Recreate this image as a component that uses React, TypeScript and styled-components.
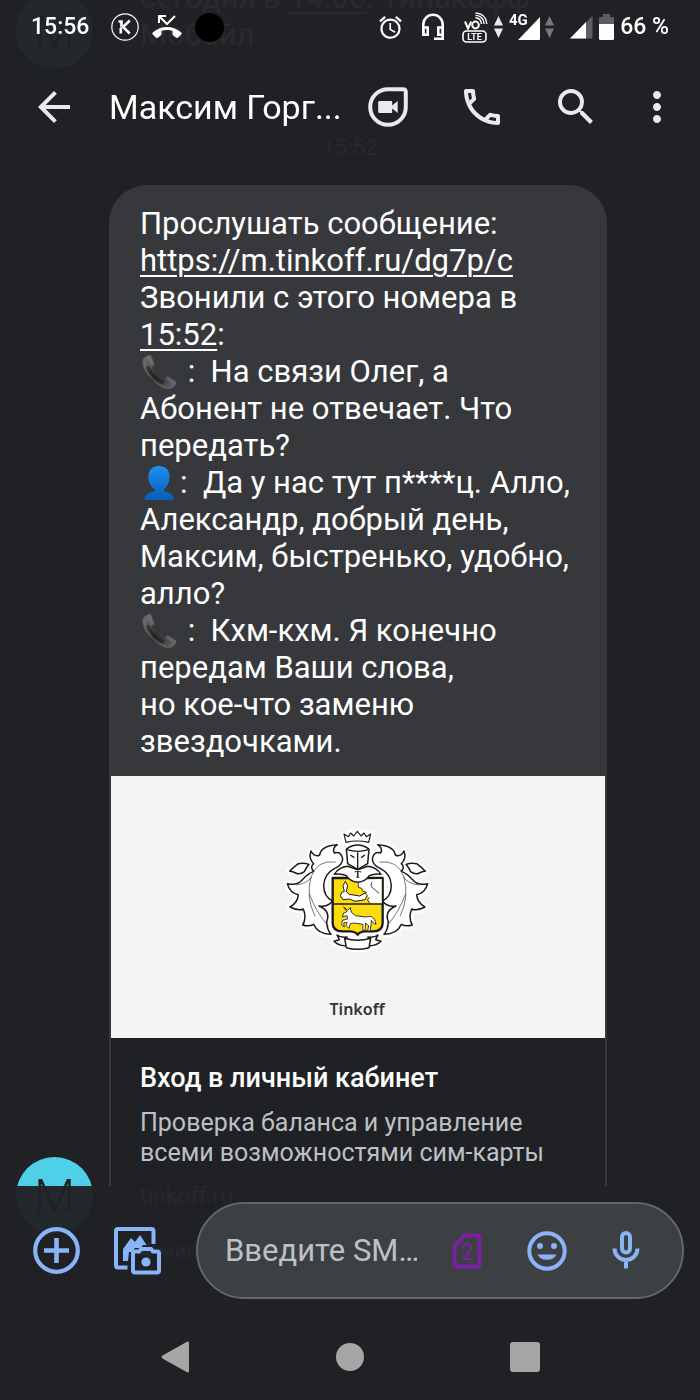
import React from "react";
import styled, { createGlobalStyle } from "styled-components";
import {
  MdArrowBack,
  MdOutlineCall,
  MdSearch,
  MdMoreVert,
  MdAlarm,
} from "react-icons/md";

const color = {
  page: "#202124",
  bubble: "#37383c",
  veil: "rgba(32, 33, 36, 0.96)",
  text: "#ffffff",
  icon: "#e8eaed",
  muted: "#bdc1c6",
  accent: "#8ab4f8",
  avatar: "#4dd0e8",
  field: "#3c4043",
  fieldLine: "#63666a",
  sim: "#7b1fa2",
  nav: "#a6a6a6",
};

const GlobalStyle = createGlobalStyle`
  * { box-sizing: border-box; }
  body {
    margin: 0;
    background: ${color.page};
    color: ${color.text};
    font-family: Roboto, "Liberation Sans", sans-serif;
  }
  button {
    padding: 0;
    border: 0;
    background: none;
    color: inherit;
    font: inherit;
    cursor: pointer;
  }
  svg { display: block; flex: none; }
`;

const Screen = styled.div`
  display: flex;
  flex-direction: column;
  justify-content: flex-end;
  height: 100vh;
  overflow: hidden;
`;

const TopBars = styled.header`
  position: fixed;
  inset: 0 0 auto;
  z-index: 1;
  background: ${color.veil};
`;

const StatusBar = styled.div`
  display: flex;
  align-items: center;
  justify-content: space-between;
  height: 54px;
  padding: 0 31px;
`;

const StatusGroup = styled.div<{ $gap: number }>`
  display: flex;
  align-items: center;
  gap: ${(p) => p.$gap}px;
`;

const StatusText = styled.span`
  font-size: 23px;
  line-height: 28px;
  font-weight: 500;
  white-space: nowrap;
`;

const CameraDot = styled.span`
  width: 29px;
  height: 29px;
  border-radius: 50%;
  background: #000;
`;

const AppBar = styled.div`
  display: flex;
  align-items: center;
  height: 106px;
  padding: 0 19px 0 30px;
  color: ${color.icon};
`;

const Title = styled.h1`
  flex: 1;
  min-width: 0;
  margin: 0 0 0 31px;
  color: ${color.text};
  font-size: 34px;
  line-height: 44px;
  font-weight: 400;
  white-space: nowrap;
`;

const Actions = styled.div`
  display: flex;
  align-items: center;
  gap: 46px;

  & > :last-child { margin-left: -13px; }
`;

const Thread = styled.main`
  display: flex;
  flex-direction: column;
`;

const MessageRow = styled.article`
  display: flex;
  align-items: flex-end;
  gap: 16px;
  padding: 0 93px 0 16px;
`;

const Avatar = styled.span`
  flex: none;
  width: 77px;
  height: 77px;
  border-radius: 50%;
  background: ${color.avatar};
  color: ${color.page};
  font-size: 47px;
  line-height: 77px;
  font-weight: 300;
  text-align: center;
`;

const Bubble = styled.div`
  flex: 1;
  min-width: 0;
  border-radius: 38px 38px 38px 8px;
  overflow: hidden;
  background: ${color.bubble};
`;

const BubbleText = styled.p`
  margin: 0;
  padding: 20px 31px 16px;
  font-size: 31px;
  line-height: 37px;

  a { color: inherit; text-underline-offset: 4px; text-decoration-thickness: 2px; }
  svg { display: inline-block; margin-right: 2px; vertical-align: -8px; }
`;

const Stamp = styled.time`
  display: block;
  margin: 66px 0 24px;
  color: ${color.muted};
  font-size: 22px;
  line-height: 26px;
  text-align: center;
`;

const Preview = styled.a`
  display: block;
  margin: 0 2px 2px;
  border-radius: 0 0 36px 36px;
  background: ${color.page};
  color: inherit;
  text-decoration: none;
`;

const PreviewImage = styled.figure`
  display: flex;
  flex-direction: column;
  align-items: center;
  justify-content: space-between;
  height: 262px;
  margin: 0;
  padding: 51px 2px 17px 0;
  background: #f4f4f4;

  figcaption {
    color: #333;
    font: 600 16px/24px "Noto Sans", "Open Sans", sans-serif;
  }
`;

const PreviewBody = styled.div`
  padding: 24px 24px 20px 29px;
  color: ${color.muted};
  font-size: 25px;
  line-height: 30px;

  h2 {
    margin: 0 0 14px;
    color: ${color.text};
    font-size: 27px;
    line-height: 32px;
    font-weight: 500;
  }
  p { margin: 0; }
  p + p { margin-top: 14px; font-size: 23px; }
`;

const SentAgo = styled.p`
  margin: 0;
  padding: 4px 0 136px 140px;
  color: ${color.muted};
  font-size: 22px;
  line-height: 26px;
`;

const BottomBars = styled.footer`
  position: fixed;
  inset: auto 0 0;
  z-index: 1;
  background: ${color.veil};
`;

const Composer = styled.form`
  display: flex;
  align-items: center;
  gap: 34px;
  padding: 16px 16px 15px 33px;
  color: ${color.accent};
`;

const Field = styled.div`
  display: flex;
  flex: 1;
  align-items: center;
  gap: 35px;
  min-width: 0;
  height: 97px;
  padding: 0 32px 0 27px;
  border: 2px solid ${color.fieldLine};
  border-radius: 49px;
  background: ${color.field};
`;

const MessageInput = styled.input`
  flex: 1;
  min-width: 0;
  padding: 0;
  border: 0;
  outline: 0;
  background: none;
  color: ${color.text};
  font: 400 31px/40px Roboto, sans-serif;

  &::placeholder { color: ${color.muted}; opacity: 1; }
`;

const NavBar = styled.nav`
  display: flex;
  align-items: center;
  justify-content: center;
  gap: 146px;
  height: 86px;
  color: ${color.nav};
`;

const KIcon = () => (
  <svg width="28" height="28" viewBox="0 0 28 28" fill="none" stroke="#fff">
    <circle cx="14" cy="14" r="13.200" strokeWidth="1.200" />
    <path d="M7.500 8.500h3v4.500M9.800 15v5.500M18.800 7.500 12 14l6.800 6.500" strokeWidth="2.600" />
    <path d="M9.800 12.500V15" strokeWidth="1.200" />
  </svg>
);

const MissedCallIcon = () => (
  <svg width="30" height="24" viewBox="0 0 30 24" fill="#fff">
    <path d="M7 8V1h7M7.500 1.500 15 9l8-8" fill="none" stroke="#fff" strokeWidth="2" />
    <path d="M15 12C9.500 12 4.500 14 .8 17.600q-1 1 0 2l3 3q.9.900 2 .1l3-2.300q.7-.6.7-1.500v-3.200q5.500-1.500 11 0v3.200q0 .9.700 1.500l3 2.300q1.100.8 2-.1l3-3q1-1 0-2C25.500 14 20.500 12 15 12z" />
  </svg>
);

const HeadsetIcon = () => (
  <svg width="24" height="28" viewBox="0 0 24 28" fill="none" stroke="#fff" strokeWidth="2.600">
    <path d="M2.300 21V11.500a9.700 9.700 0 0 1 19.400 0v14.200H13" />
    <path d="M2.300 14.500h4.400v7.200H2.300zM17.300 14.500h4.400v7.200h-4.400z" />
  </svg>
);

const VolteIcon = () => (
  <svg width="26" height="31" viewBox="0 0 26 31" fill="none" stroke="#fff">
    <path d="m3 9.500 3 7 3.200-7" strokeWidth="2" />
    <ellipse cx="13.500" cy="13" rx="3.300" ry="3.400" strokeWidth="2" />
    <path d="M13.500 5.800q5.300.2 6 6.200M13.500 1q10.500.500 11.300 11M13.500 3.400q8 .3 8.600 8.600" strokeWidth="1.400" />
    <rect x="1" y="19" width="23" height="11" rx="3.500" strokeWidth="1.600" />
    <text x="12.500" y="27.700" fill="#fff" stroke="none" fontSize="9" fontWeight="700" textAnchor="middle">LTE</text>
  </svg>
);

const DataArrows = ({ fill }: { fill: string }) => (
  <svg width="9" height="22" viewBox="0 0 9 22" fill={fill}>
    <path d="M4.500 0 9 9.500H0zM4.500 22 9 12.500H0z" />
  </svg>
);

const SignalLte = () => (
  <svg width="32" height="28" viewBox="0 0 32 28" fill="#fff">
    <path d="M9 27 31 4v22q0 1-1 1z" />
    <path d="M0 0h18v13H0z" fill={color.page} />
    <text x="0" y="12" fontSize="15" fontWeight="700">4G</text>
  </svg>
);

const SignalPartial = () => (
  <svg width="23" height="24" viewBox="0 0 23 24">
    <path d="M0 23.500 22.500 1v22.500z" fill="#5d5e61" />
    <path d="M0 23.500 16 7v16.500z" fill="#fff" />
  </svg>
);

const BatteryIcon = () => (
  <svg width="15" height="26" viewBox="0 0 15 26">
    <path d="M4 0h7v3h3q1 0 1 1v7H0V4q0-1 1-1h3z" fill="#5d5e61" />
    <path d="M0 10h15v14.500q0 1.500-1.500 1.500h-12Q0 26 0 24.500z" fill="#fff" />
  </svg>
);

const DuoIcon = () => (
  <svg width="44" height="40" viewBox="0 0 44 40">
    <path d="M20 2.200h15q2.800 0 2.800 2.800v15A17.800 17.800 0 1 1 20 2.200z" fill="none" stroke="currentColor" strokeWidth="4" />
    <path d="M11.500 14h11.700q1 0 1 1v3.400l5.500-4.300v11.800l-5.500-4.300V25q0 1-1 1H11.500q-1.300 0-1.300-1V15q0-1 1.300-1z" fill="currentColor" />
  </svg>
);

const PhoneEmoji = () => (
  <svg width="38" height="36" viewBox="0 0 38 36" role="img" aria-label="Телефон">
    <defs>
      <linearGradient id="handset" x1="0" y1="0" x2="1" y2="1">
        <stop offset="0" stopColor="#6e6e6e" />
        <stop offset=".3" stopColor="#555" />
        <stop offset=".5" stopColor="#333" />
        <stop offset=".75" stopColor="#484848" />
        <stop offset="1" stopColor="#757575" />
      </linearGradient>
    </defs>
    <path
      d="M8.500 1.200Q5 2.300 3 5.200 1.500 9 4.500 16c3.500 8.200 10.500 15.500 19.500 18.500 4 1.200 7.500.5 10.300-2q2.500-2.500 1.800-5l-7.800-5.300q-1.300-.7-2.500.8-1 1.800-3.300 2.600C17 24 13.500 19.500 12 14.300q-.2-1.300 1.300-1.800 1.500-.7 1.300-2.200l-3-7.800q-1-1.700-3.100-1.300z"
      fill="url(#handset)"
    />
    <path d="M8 14q4 9 14 14" fill="none" stroke="#1c1c1c" strokeWidth="4" strokeLinecap="round" opacity=".6" />
    <path d="M8.500 1.500q1.800 0 2.500 1.500l3.200 7.500q-2 .7-2.700 2L7 5q-.5-2.500 1.500-3.500zM26.500 23.200q1-1 2-.4l7 5q.5 1.800-1 2.400l-8.500-4.400z" fill="#777" opacity=".5" />
    <path d="M4 8q1 9 8 16.500T26 33.500" fill="none" stroke="#808080" strokeWidth="1" opacity=".6" />
  </svg>
);

const PersonEmoji = () => (
  <svg width="38" height="36" viewBox="0 0 38 36" role="img" aria-label="Человек">
    <defs>
      <linearGradient id="person" x1="0" y1="0" x2="0" y2="1">
        <stop offset="0" stopColor="#1d8ff0" />
        <stop offset="1" stopColor="#0a5cb8" />
      </linearGradient>
    </defs>
    <path d="M19 1c6.500 0 10.600 4 10.600 10.500 0 6-2.600 10.500-5.600 12.500v2q6 1.500 8.500 4.500 1.500 2 1.500 4.500H4.500q0-2.500 1.500-4.500 2.500-3 8.500-4.500v-2C11 22 8.400 17.500 8.400 11.500 8.400 5 12.500 1 19 1z" fill="url(#person)" />
  </svg>
);

const MANTLE =
  "M201 73Q184 84 192 98 213 91 217 116 216 135 192 145 163 160 160 194 160 230 187 242 170 262 146 257 182 272 169 304 170 328 182 342 142 342 130 312 116 320 97 314 110 292 99 266 84 273 59 260 82 248 84 223 58 218 51 190 80 197 96 178 112 160 130 153 118 140 130 130 114 114 122 92 133 112 148 104 152 76 201 73z";
const LEAF = "M58 153Q70 140 84 130 100 126 116 132 106 144 102 154 88 164 76 158 68 153 58 153z";
const HELMET = "M228 86Q262 62 296 86L292 130 262 147 232 130z";
const CROWN = "M227 66 221 41 234 49 241 38 250 47 261 33 272 47 281 38 288 49 301 41 295 66Q261 58 227 66z";
const SHIELD = "M187 173V308Q187 333 216 333H240Q256 334 262 343 268 334 284 333H308Q337 333 337 308V173z";
const COLLAR = "M192 162Q206 140 232 138L262 148 292 138Q318 140 332 162 314 158 297 166 285 184 262 186 240 184 228 166 212 158 192 162z";
const BANNER = "M223 354Q262 366 301 354L296 382Q262 392 228 382z";
const RIBBON = "M230 350Q210 352 200 344L207 358 191 363Q205 377 226 376z";

const CrestHalf = () => (
  <>
    <path d={MANTLE} />
    <path d={LEAF} />
    <path d={RIBBON} />
  </>
);

const Crest = () => (
  <svg width="147" height="127" viewBox="41 20 441 381" role="img" aria-label="Герб">
    <g fill="#fff" stroke="#fff" strokeWidth="20" strokeLinejoin="round">
      <CrestHalf />
      <g transform="matrix(-1 0 0 1 523 0)"><CrestHalf /></g>
      <path d={HELMET} />
      <path d={CROWN} />
      <path d={SHIELD} />
      <path d={BANNER} />
    </g>
    <g fill="#fff" stroke="#1b1b1b" strokeWidth="4.500" strokeLinejoin="round">
      <CrestHalf />
      <g transform="matrix(-1 0 0 1 523 0)"><CrestHalf /></g>
      <path d={BANNER} />
      <path d={SHIELD} fill="#fcdc0c" strokeWidth="7" />
      <path d="M248 180 276 178 334 176V250H304L296 244 297 232 288 226 289 214 278 210 272 202 264 200 262 190z" stroke="none" />
      <path d="M264 188V201L274 204 278 213 289 216M297 232 291 238 298 248M304 186 302 198 318 212 326 218" fill="none" strokeWidth="2.500" />
      <path d="M222 214 218 196 225 183 232 196 228 214 237 222 268 227 284 218 291 226 284 238 254 243 238 236 218 238 210 226 214 216z" strokeWidth="3" />
      <path d="M187 251H337" strokeWidth="4" />
      <path d="M220 260 232 270 240 262 243 276 256 286 284 290 302 288 313 297 317 312 309 308 303 300 302 314 299 332 292 332 295 316 286 308 284 330 277 330 278 312 252 308 240 310 236 324 228 316 230 306 220 308 222 320 214 314 216 300 232 296 230 286 216 290 220 278 230 274z" strokeWidth="2.500" />
      <path d={COLLAR} />
      <path d={HELMET} />
      <path d="M230 88Q262 98 294 88M262 96V146M240 104 252 112M284 104 272 112" fill="none" strokeWidth="4" />
      <path d={CROWN} strokeWidth="3.500" />
    </g>
    <g fill="none" stroke="#333" strokeWidth="2">
      <path d="M196 125Q140 118 122 170 106 230 134 288M124 170Q110 190 78 194M118 222Q134 270 174 318" />
      <path d="M327 125Q383 118 401 170 417 230 389 288M399 170Q413 190 445 194M405 222Q389 270 349 318" />
    </g>
    <text x="262" y="173" fill="#1b1b1b" fontFamily="Liberation Serif, serif" fontWeight="700" fontSize="29" textAnchor="middle">T</text>
  </svg>
);

const PlusCircleIcon = () => (
  <svg width="47" height="47" viewBox="0 0 47 47" fill="none" stroke="currentColor">
    <circle cx="23.500" cy="23.500" r="21.300" strokeWidth="4.200" />
    <path d="M11 23.500h25M23.500 11v25" strokeWidth="4.600" />
  </svg>
);

const GalleryIcon = () => (
  <svg width="48" height="48" viewBox="0 0 48 48" fill="none" stroke="currentColor" strokeWidth="4">
    <path d="M39.500 17V4q0-2-2-2H4Q2 2 2 4v34.500q0 2 2 2h9.500" />
    <path d="M9 34V22l8-11 4 4 5-7 6.500 10H29l-2 3h-6l-3 4h-3l-1 9z" fill="currentColor" stroke="none" />
    <path d="M25 24.500 27 22h10l2 2.500h4q2 0 2 2v17q0 2-2 2H21q-2 0-2-2v-17q0-2 2-2z" />
    <circle cx="32" cy="35" r="4.600" fill="currentColor" stroke="none" />
  </svg>
);

const SimIcon = () => (
  <svg width="40" height="36" viewBox="0 0 40 36">
    <path d="M12.500 2.500H26q1.500 0 1.500 1.500v28q0 1.500-1.500 1.500H4q-1.500 0-1.500-1.500V12.500z" fill="none" stroke={color.sim} strokeWidth="4" />
    <text x="15" y="27" fill={color.sim} fontSize="24" textAnchor="middle">2</text>
  </svg>
);

const SmileIcon = () => (
  <svg width="40" height="40" viewBox="0 0 40 40" fill="currentColor">
    <circle cx="20" cy="20" r="17.700" fill="none" stroke="currentColor" strokeWidth="4" />
    <circle cx="13" cy="15" r="3" />
    <circle cx="27" cy="15" r="3" />
    <path d="M10.500 23.500h19a10.300 8.500 0 0 1-19 0z" />
  </svg>
);

const MicIcon = () => (
  <svg width="48" height="48" viewBox="0 0 48 48" fill="none" stroke="currentColor" strokeWidth="4">
    <rect x="20" y="6" width="8" height="19.500" rx="4" />
    <path d="M12.500 21.500a11.500 11.500 0 0 0 23 0M24 33v8.500" />
  </svg>
);

const App = () => (
  <>
    <GlobalStyle />
    <Screen>
      <TopBars>
        <StatusBar>
          <StatusGroup $gap={22}>
            <StatusText>15:56</StatusText>
            <StatusGroup $gap={13}>
              <KIcon />
              <MissedCallIcon />
              <CameraDot />
            </StatusGroup>
          </StatusGroup>
          <StatusGroup $gap={6}>
            <StatusGroup $gap={17}>
              <MdAlarm size={27} />
              <HeadsetIcon />
              <VolteIcon />
            </StatusGroup>
            <DataArrows fill="#e8e8e8" />
            <StatusGroup $gap={4}>
              <SignalLte />
              <StatusGroup $gap={16}>
                <DataArrows fill="#77787b" />
                <SignalPartial />
              </StatusGroup>
            </StatusGroup>
            <BatteryIcon />
            <StatusText>66 %</StatusText>
          </StatusGroup>
        </StatusBar>
        <AppBar>
          <button type="button" aria-label="Назад"><MdArrowBack size={48} /></button>
          <Title>Максим Горг...</Title>
          <Actions>
            <button type="button" aria-label="Видеозвонок"><DuoIcon /></button>
            <button type="button" aria-label="Позвонить"><MdOutlineCall size={48} /></button>
            <button type="button" aria-label="Поиск"><MdSearch size={48} /></button>
            <button type="button" aria-label="Ещё"><MdMoreVert size={48} /></button>
          </Actions>
        </AppBar>
      </TopBars>

      <Thread>
        <MessageRow>
          <Avatar>М</Avatar>
          <Bubble>
            <BubbleText>
              сегодня в <a href="#call-1406">14:06</a>. Тинькофф Мобайл
            </BubbleText>
          </Bubble>
        </MessageRow>
        <Stamp>15:52</Stamp>
        <MessageRow>
          <Avatar>М</Avatar>
          <Bubble>
            <BubbleText>
              Прослушать сообщение:
              <br />
              <a href="#voicemail">https://m.tinkoff.ru/dg7p/c</a>
              <br />
              Звонили с этого номера в <a href="#call-1552">15:52</a>:
              <br />
              <PhoneEmoji />
              {" :\u00a0 На связи Олег, а Абонент не отвечает. Что передать?"}
              <br />
              <PersonEmoji />
              {":\u00a0 Да у нас тут п****ц. Алло, Александр, добрый день, Максим, быстренько, удобно, алло?"}
              <br />
              <PhoneEmoji />
              {" :\u00a0 Кхм-кхм. Я конечно передам Ваши слова,"}
              <br />
              но кое-что заменю звездочками.
            </BubbleText>
            <Preview href="#preview">
              <PreviewImage>
                <Crest />
                <figcaption>Tinkoff</figcaption>
              </PreviewImage>
              <PreviewBody>
                <h2>Вход в личный кабинет</h2>
                <p>Проверка баланса и управление всеми возможностями сим-карты</p>
                <p>tinkoff.ru</p>
              </PreviewBody>
            </Preview>
          </Bubble>
        </MessageRow>
        <SentAgo>4 мин</SentAgo>
      </Thread>

      <BottomBars>
        <Composer>
          <button type="button" aria-label="Добавить"><PlusCircleIcon /></button>
          <button type="button" aria-label="Галерея и камера"><GalleryIcon /></button>
          <Field>
            <MessageInput type="text" aria-label="Введите SMS" placeholder="Введите SM…" />
            <button type="button" aria-label="SIM 2"><SimIcon /></button>
            <button type="button" aria-label="Эмодзи"><SmileIcon /></button>
            <button type="button" aria-label="Голосовой ввод"><MicIcon /></button>
          </Field>
        </Composer>
        <NavBar>
          <button type="button" aria-label="Назад">
            <svg width="29" height="32" viewBox="0 0 29 32" fill="currentColor">
              <path d="M26 .8 1.500 14.500q-1.800 1.500 0 3L26 31.200q2 .8 2-1.200V2q0-2-2-1.200z" />
            </svg>
          </button>
          <button type="button" aria-label="Домой">
            <svg width="28" height="28" viewBox="0 0 28 28" fill="currentColor"><circle cx="14" cy="14" r="14" /></svg>
          </button>
          <button type="button" aria-label="Недавние">
            <svg width="30" height="30" viewBox="0 0 30 30" fill="currentColor"><rect width="30" height="30" rx="3" /></svg>
          </button>
        </NavBar>
      </BottomBars>
    </Screen>
  </>
);

export default App;
